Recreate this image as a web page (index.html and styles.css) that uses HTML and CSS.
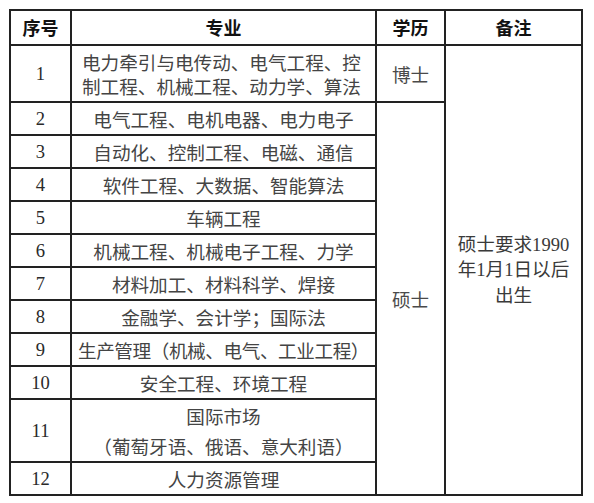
FILE: index.html
```html
<!DOCTYPE html>
<html lang="zh-CN">
<head>
<meta charset="utf-8">
<title>专业需求表</title>
<link rel="stylesheet" href="styles.css">
</head>
<body>
<div class="grid">
  <div class="cell head">序号</div>
  <div class="cell head">专业</div>
  <div class="cell head">学历</div>
  <div class="cell head">备注</div>

  <div class="cell num">1</div>
  <div class="cell major left"><div>电力牵引与电传动、电气工程、控</div><div>制工程、机械工程、动力学、算法</div></div>
  <div class="cell deg">博士</div>
  <div class="cell note span-note">硕士要求1990<br>年1月1日以后<br>出生</div>

  <div class="cell num">2</div><div class="cell major">电气工程、电机电器、电力电子</div>
  <div class="cell deg span-deg">硕士</div>
  <div class="cell num">3</div><div class="cell major">自动化、控制工程、电磁、通信</div>
  <div class="cell num">4</div><div class="cell major">软件工程、大数据、智能算法</div>
  <div class="cell num">5</div><div class="cell major">车辆工程</div>
  <div class="cell num">6</div><div class="cell major">机械工程、机械电子工程、力学</div>
  <div class="cell num">7</div><div class="cell major">材料加工、材料科学、焊接</div>
  <div class="cell num">8</div><div class="cell major">金融学、会计学；国际法</div>
  <div class="cell num">9</div><div class="cell major tight">生产管理（机械、电气、工业工程）</div>
  <div class="cell num">10</div><div class="cell major">安全工程、环境工程</div>
  <div class="cell num">11</div>
  <div class="cell major stack"><div class="para">国际市场</div><div class="para">（葡萄牙语、俄语、意大利语）</div></div>
  <div class="cell num">12</div><div class="cell major">人力资源管理</div>
</div>
</body>
</html>
```

FILE: styles.css
```css
html, body {
  margin: 0;
  padding: 0;
  background: #ffffff;
}

body {
  padding: 9px 0 0 9px;
  font-family: "Liberation Serif", "Noto Sans CJK SC", serif;
  color: #333;
}

.grid {
  display: grid;
  grid-template-columns: 61px 305px 69px 137px;
  grid-template-rows: 35px 57px repeat(9, 33px) 63px 33px;
  width: max-content;
  border-top: 2px solid #222;
  border-left: 2px solid #222;
}

.cell {
  box-sizing: border-box;
  border-right: 2px solid #222;
  border-bottom: 2px solid #222;
  display: flex;
  align-items: center;
  justify-content: center;
  text-align: center;
  font-size: 18.6px;
  line-height: 23px;
  white-space: nowrap;
}

.head {
  font-family: "Noto Sans CJK SC", sans-serif;
  font-weight: 700;
  font-size: 18px;
  color: #111;
}

.num {
  grid-column: 1;
  font-family: "Liberation Serif", serif;
  color: #2a2a2a;
}

.major {
  grid-column: 2;
  font-family: "Noto Sans CJK SC", sans-serif;
  color: #444;
}

.major.left {
  flex-direction: column;
  align-items: flex-start;
  text-align: left;
  padding-left: 10px;
  line-height: 24px;
}

.major.tight {
  letter-spacing: -0.4px;
}

.stack {
  flex-direction: column;
}

.para {
  line-height: 30px;
}

.deg {
  grid-column: 3;
  font-family: "Noto Sans CJK SC", sans-serif;
  color: #4a4a4a;
}

.span-deg {
  grid-row: 3 / 14;
}

.note {
  grid-column: 4;
  color: #3a3a3a;
  line-height: 25.5px;
}

.span-note {
  grid-row: 2 / 14;
}
```
